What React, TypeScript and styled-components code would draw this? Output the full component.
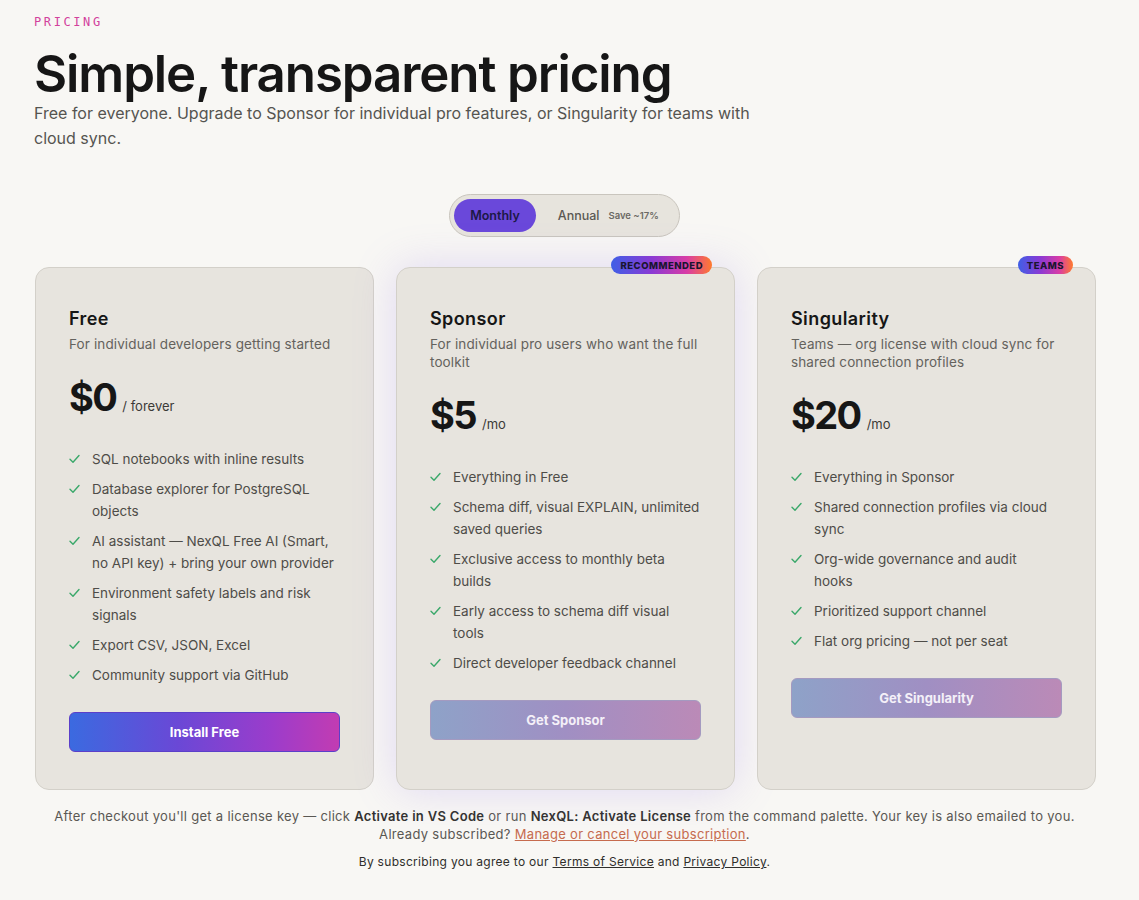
import styled, { createGlobalStyle, css } from 'styled-components'

const GlobalStyle = createGlobalStyle`
  * { box-sizing: border-box; }
  body {
    margin: 0;
    background: #f8f7f4;
    font-family: Inter, "Noto Sans", sans-serif;
    color: #161616;
  }
`

const Page = styled.main`
  padding: 14px 44px 30px 34px;
`

const Eyebrow = styled.div`
  font-family: "DejaVu Sans Mono", "Liberation Mono", monospace;
  font-size: 12px;
  letter-spacing: 2.6px;
  color: #d2409c;
  line-height: 16px;
`

const Title = styled.h1`
  margin: 17px 0 0;
  font-size: 51px;
  font-weight: 600;
  letter-spacing: -1.1px;
  line-height: 54px;
`

const Lead = styled.p`
  margin: 0;
  max-width: 740px;
  font-size: 16px;
  line-height: 25px;
  color: #555450;
`

const ToggleRow = styled.div`
  display: flex;
  justify-content: center;
  margin-top: 43px;
`

const Toggle = styled.div`
  display: flex;
  align-items: center;
  gap: 6px;
  padding: 4px;
  height: 43px;
  border-radius: 22px;
  background: #e7e4dd;
  border: 1px solid #c9c5bd;
`

const ToggleOption = styled.button<{ $active?: boolean }>`
  border: 0;
  height: 33px;
  padding: 0 16px;
  border-radius: 17px;
  font-family: inherit;
  font-size: 12.5px;
  font-weight: 600;
  display: flex;
  align-items: center;
  gap: 9px;
  cursor: pointer;
  ${(p) =>
    p.$active
      ? css`
          background: #6a48da;
          color: #1c1846;
        `
      : css`
          background: transparent;
          color: #5a5853;
          font-weight: 500;
        `}
`

const Save = styled.span`
  font-size: 9.5px;
  font-weight: 600;
  color: #6b6964;
`

const Cards = styled.div`
  display: grid;
  grid-template-columns: repeat(3, 339px);
  gap: 22px;
  margin-top: 30px;
  padding-left: 1px;
`

const Card = styled.section<{ $featured?: boolean }>`
  position: relative;
  background: #e7e4de;
  border: 1px solid #d3d0c9;
  border-radius: 14px;
  padding: 40px 33px 38px;
  height: 523px;
  ${(p) =>
    p.$featured &&
    css`
      box-shadow: 0 0 44px rgba(150, 120, 240, 0.24);
    `}
`

const Badge = styled.span`
  position: absolute;
  top: -12px;
  right: 22px;
  height: 18px;
  padding: 0 9px;
  border-radius: 9px;
  display: flex;
  align-items: center;
  background: linear-gradient(90deg, #3f5fe6 0%, #8a3ad4 40%, #d83ca6 75%, #ff7b2e 100%);
  color: #1a1530;
  font-size: 9.5px;
  font-weight: 800;
  letter-spacing: 0.5px;
`

const PlanName = styled.h2`
  margin: 0;
  font-size: 18px;
  font-weight: 600;
  letter-spacing: 0.4px;
  line-height: 22px;
`

const PlanDesc = styled.p`
  margin: 5px 0 0;
  font-size: 13.5px;
  line-height: 18px;
  letter-spacing: 0.12px;
  color: #64625d;
`

const PriceRow = styled.div`
  display: flex;
  align-items: baseline;
  gap: 6px;
  margin-top: 22px;
`

const Amount = styled.span`
  font-size: 38px;
  font-weight: 700;
  letter-spacing: -1.6px;
  line-height: 44px;
`

const Period = styled.span`
  font-size: 13px;
  color: #3b3a37;
`

const Features = styled.ul`
  list-style: none;
  margin: 29px 0 0;
  padding: 0;
  display: flex;
  flex-direction: column;
  gap: 8px;
`

const Feature = styled.li`
  display: flex;
  gap: 12px;
  font-size: 13.5px;
  line-height: 22px;
  color: #4e4c48;
  white-space: pre-line;

  svg {
    flex: none;
    margin-top: 6px;
  }
`

const CtaButton = styled.button<{ $primary?: boolean }>`
  width: 100%;
  height: 40px;
  margin-top: 26px;
  border-radius: 6px;
  font-family: inherit;
  font-size: 13px;
  font-weight: 700;
  color: #fff;
  cursor: pointer;
  ${(p) =>
    p.$primary
      ? css`
          border: 1px solid #5b3fc9;
          background: linear-gradient(90deg, #3b6ae0 0%, #6a48d6 40%, #9c3ccb 75%, #c23cb2 100%);
        `
      : css`
          border: 1px solid #a49ac0;
          background: linear-gradient(90deg, #8ea2c8 0%, #a08fc3 50%, #bb8ab7 100%);
          color: #f4f0f8;
        `}
`

const Footer = styled.footer`
  margin-top: 17px;
  text-align: center;
  font-size: 13px;
  line-height: 18px;
  letter-spacing: 0.3px;
  color: #5a5853;

  b {
    color: #33322f;
    font-weight: 600;
  }
`

const ManageLink = styled.a`
  color: #c66b4e;
  text-decoration: underline;
`

const Legal = styled.p`
  margin: 10px 0 0;
  font-size: 12px;
  color: #2f2e2b;

  a {
    color: inherit;
    text-decoration: underline;
  }
`

const Check = () => (
  <svg width="11" height="10" viewBox="0 0 11 10" fill="none">
    <path d="M1 5.2 L4 8.2 L10 1.5" stroke="#3aa86a" strokeWidth="1.4" strokeLinecap="round" strokeLinejoin="round" />
  </svg>
)

type Plan = {
  name: string
  desc: string
  price: string
  period: string
  features: string[]
  cta: string
  badge?: string
  featured?: boolean
  primary?: boolean
}

const plans: Plan[] = [
  {
    name: 'Free',
    desc: 'For individual developers getting started',
    price: '$0',
    period: '/ forever',
    features: [
      'SQL notebooks with inline results',
      'Database explorer for PostgreSQL objects',
      'AI assistant — NexQL Free AI (Smart, no API key) + bring your own provider',
      'Environment safety labels and risk signals',
      'Export CSV, JSON, Excel',
      'Community support via GitHub',
    ],
    cta: 'Install Free',
    primary: true,
  },
  {
    name: 'Sponsor',
    desc: 'For individual pro users who want the full toolkit',
    price: '$5',
    period: '/mo',
    features: [
      'Everything in Free',
      'Schema diff, visual EXPLAIN, unlimited saved queries',
      'Exclusive access to monthly beta builds',
      'Early access to schema diff visual tools',
      'Direct developer feedback channel',
    ],
    cta: 'Get Sponsor',
    badge: 'RECOMMENDED',
    featured: true,
  },
  {
    name: 'Singularity',
    desc: 'Teams — org license with cloud sync for shared connection profiles',
    price: '$20',
    period: '/mo',
    features: [
      'Everything in Sponsor',
      'Shared connection profiles via cloud sync',
      'Org-wide governance and audit\nhooks',
      'Prioritized support channel',
      'Flat org pricing — not per seat',
    ],
    cta: 'Get Singularity',
    badge: 'TEAMS',
  },
]

export default function App() {
  return (
    <>
      <GlobalStyle />
      <Page>
        <Eyebrow>PRICING</Eyebrow>
        <Title>Simple, transparent pricing</Title>
        <Lead>
          Free for everyone. Upgrade to Sponsor for individual pro features, or Singularity for teams with
          cloud sync.
        </Lead>

        <ToggleRow>
          <Toggle>
            <ToggleOption $active>Monthly</ToggleOption>
            <ToggleOption>
              Annual <Save>Save ~17%</Save>
            </ToggleOption>
          </Toggle>
        </ToggleRow>

        <Cards>
          {plans.map((plan) => (
            <Card key={plan.name} $featured={plan.featured}>
              {plan.badge && <Badge>{plan.badge}</Badge>}
              <PlanName>{plan.name}</PlanName>
              <PlanDesc>{plan.desc}</PlanDesc>
              <PriceRow>
                <Amount>{plan.price}</Amount>
                <Period>{plan.period}</Period>
              </PriceRow>
              <Features>
                {plan.features.map((f) => (
                  <Feature key={f}>
                    <Check />
                    <span>{f}</span>
                  </Feature>
                ))}
              </Features>
              <CtaButton $primary={plan.primary}>{plan.cta}</CtaButton>
            </Card>
          ))}
        </Cards>

        <Footer>
          After checkout you'll get a license key — click <b>Activate in VS Code</b> or run{' '}
          <b>NexQL: Activate License</b> from the command palette. Your key is also emailed to you.
          <br />
          Already subscribed? <ManageLink href="#">Manage or cancel your subscription</ManageLink>.
          <Legal>
            By subscribing you agree to our <a href="#">Terms of Service</a> and <a href="#">Privacy Policy</a>.
          </Legal>
        </Footer>
      </Page>
    </>
  )
}
